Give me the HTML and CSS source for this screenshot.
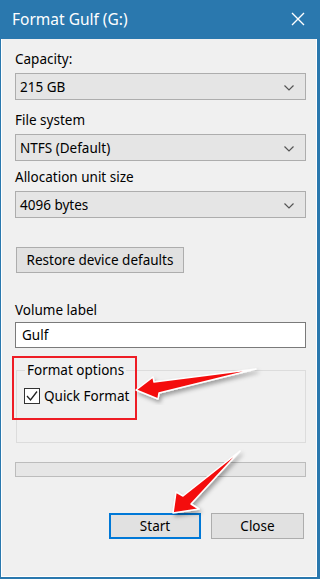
FILE: index.html
```html
<!DOCTYPE html>
<html lang="en">
<head>
    <meta charset="UTF-8">
    <meta name="viewport" content="width=device-width, initial-scale=1.0">
    <title>Format Gulf (G:)</title>
    <link rel="stylesheet" href="styles.css">
</head>
<body>
<div class="window">
    <div class="titlebar">
        <span class="title">Format Gulf (G:)</span>
        <svg class="close-x" width="14" height="14" viewBox="0 0 14 14">
            <path d="M1 1 L13 13 M13 1 L1 13" stroke="#fff" stroke-width="1.4" fill="none"/>
        </svg>
    </div>
    <div class="client">
        <div class="label first">Capacity:</div>
        <div class="select">
            <span>215 GB</span>
            <svg class="chev" width="10" height="6" viewBox="0 0 10 6"><path d="M0.5 0.5 L5 5 L9.5 0.5" stroke="#555" stroke-width="1.2" fill="none"/></svg>
        </div>

        <div class="label fs">File system</div>
        <div class="select">
            <span>NTFS (Default)</span>
            <svg class="chev" width="10" height="6" viewBox="0 0 10 6"><path d="M0.5 0.5 L5 5 L9.5 0.5" stroke="#555" stroke-width="1.2" fill="none"/></svg>
        </div>

        <div class="label alloc">Allocation unit size</div>
        <div class="select">
            <span>4096 bytes</span>
            <svg class="chev" width="10" height="6" viewBox="0 0 10 6"><path d="M0.5 0.5 L5 5 L9.5 0.5" stroke="#555" stroke-width="1.2" fill="none"/></svg>
        </div>

        <button class="btn restore">Restore device defaults</button>

        <div class="label vol">Volume label</div>
        <div class="textbox">Gulf</div>

        <fieldset class="group">
            <legend>Format options</legend>
            <div class="check-row">
                <span class="checkbox">
                    <svg width="14" height="14" viewBox="0 0 14 14"><path d="M2 7 L5.5 11 L12 2.5" stroke="#222" stroke-width="1.3" fill="none"/></svg>
                </span>
                <span>Quick Format</span>
            </div>
        </fieldset>

        <div class="progress"></div>

        <div class="buttons">
            <button class="btn start">Start</button>
            <button class="btn close">Close</button>
        </div>
    </div>

    <!-- annotations drawn over the dialog -->
    <div class="mark-box"></div>
    <svg class="arrows" width="320" height="579" viewBox="0 0 320 579">
        <defs>
            <filter id="shadow" x="-20%" y="-20%" width="140%" height="140%">
                <feDropShadow dx="2" dy="3" stdDeviation="2" flood-color="#000" flood-opacity="0.35"/>
            </filter>
        </defs>
        <polygon points="136,390 153,377 154,382 256,369 159,393 158,399" fill="#f40f0f" stroke="#fff" stroke-width="1.5" stroke-linejoin="round" filter="url(#shadow)"/>
        <polygon points="173,513 176,492 183,496 240,451 191,504 199,509" fill="#f40f0f" stroke="#fff" stroke-width="1.5" stroke-linejoin="round" filter="url(#shadow)"/>
    </svg>
</div>
</body>
</html>
```

FILE: styles.css
```css
* {
    box-sizing: border-box;
}

body {
    margin: 0;
    width: 320px;
    height: 579px;
    overflow: hidden;
    font-family: "Noto Sans", "Open Sans", sans-serif;
    font-size: 13.5px;
    color: #000;
}

.window {
    position: relative;
    width: 320px;
    height: 579px;
    background: #2a78ae;
    display: flex;
    flex-direction: column;
    padding: 0 3px 2px 1px;
}

.titlebar {
    height: 39px;
    display: flex;
    align-items: center;
    justify-content: space-between;
    padding: 0 12px 2px 11px;
}

.title {
    color: #fff;
    font-size: 15.5px;
}

.client {
    flex: 1;
    background: #f0f0f0;
    border: 1px solid #fff;
    border-top: none;
    padding: 10px 10px 0 13px;
    display: flex;
    flex-direction: column;
}

.label {
    height: 20px;
    line-height: 20px;
}

.label.fs {
    margin-top: 10px;
}

.label.alloc {
    margin-top: 6px;
}

.label.vol {
    margin-top: 27px;
}

.select {
    height: 27px;
    margin-top: 4px;
    background: #e5e5e5;
    border: 1px solid #adadad;
    display: flex;
    align-items: center;
    justify-content: space-between;
    padding: 0 11px 0 4px;
}

.chev {
    margin-top: 2px;
}

.btn {
    font-family: inherit;
    font-size: 13.5px;
    color: #000;
    height: 26px;
    background: #e1e1e1;
    border: 1px solid #adadad;
    padding: 0;
}

.restore {
    margin-top: 29px;
    margin-left: 1px;
    width: 168px;
}

.textbox {
    height: 26px;
    margin-top: 2px;
    background: #fff;
    border: 1px solid #7a7a7a;
    line-height: 24px;
    padding-left: 6px;
}

.group {
    margin: 12px 0 0 1px;
    height: 83px;
    border: 1px solid #dcdcdc;
    padding: 0 7px;
}

.group legend {
    padding: 0 2px;
    margin-left: 1px;
    line-height: 20px;
}

.check-row {
    display: flex;
    align-items: center;
    gap: 4px;
    margin-top: 7px;
}

.checkbox {
    width: 16px;
    height: 16px;
    border: 1px solid #333;
    background: #fff;
    display: flex;
    align-items: center;
    justify-content: center;
}

.progress {
    margin-top: 19px;
    height: 15px;
    background: #e6e6e6;
    border: 1px solid #bcbcbc;
}

.buttons {
    margin-top: 36px;
    display: flex;
    justify-content: flex-end;
    gap: 10px;
    padding-right: 2px;
}

.start {
    width: 92px;
    border: 2px solid #0078d7;
}

.close {
    width: 93px;
}

.mark-box {
    position: absolute;
    left: 12px;
    top: 356px;
    width: 125px;
    height: 64px;
    border: 2px solid #ee1c25;
}

.arrows {
    position: absolute;
    left: 0;
    top: 0;
}
```
